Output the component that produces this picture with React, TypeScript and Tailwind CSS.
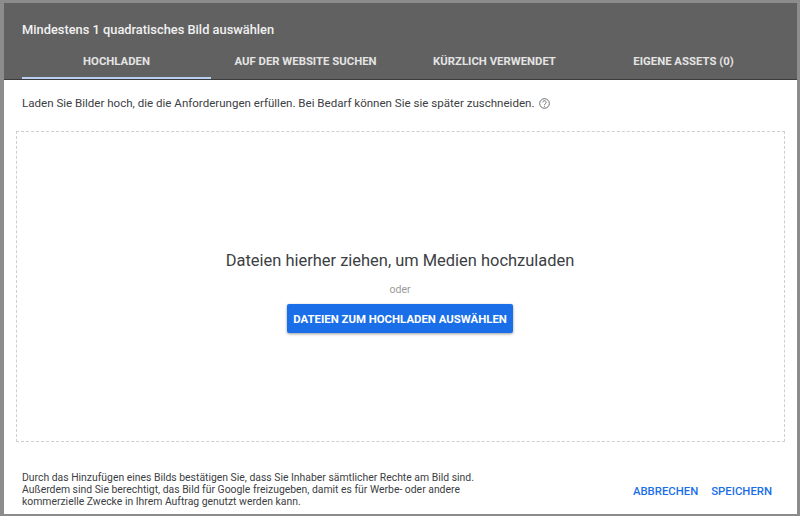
export default function App() {
  const tabs = ["HOCHLADEN", "AUF DER WEBSITE SUCHEN", "KÜRZLICH VERWENDET", "EIGENE ASSETS (0)"];
  return (
    <div className="w-[800px] h-[516px] overflow-hidden bg-[#8c8c8c] pl-[4px] pr-[3px] pt-[3px] pb-[2px] font-['Roboto',sans-serif]">
      <div className="h-full flex flex-col bg-white">
        <div className="h-[77px] shrink-0 bg-[#616161] border-b border-[#3c3c3c] px-[18px] flex flex-col">
          <div className="pt-[18px] h-[46px] text-[12.85px] leading-[18px] font-medium text-[#f1f1f1]">Mindestens 1 quadratisches Bild auswählen</div>
          <div className="flex flex-1">
            {tabs.map((t, i) => (
              <div key={t} className={`w-[189px] text-center text-[11.35px] leading-[24px] font-bold text-[#e4e4e4] ${i === 0 ? "border-b-2 border-[#b9d0f0]" : ""}`}>{t}</div>
            ))}
          </div>
        </div>
        <div className="h-[51px] shrink-0 pl-[18px] pt-[15px] flex items-start gap-[5px] text-[11.55px] leading-[16px] text-[#3c4043]">
          <span>Laden Sie Bilder hoch, die die Anforderungen erfüllen. Bei Bedarf können Sie sie später zuschneiden.</span>
          <svg width="11" height="11" viewBox="0 0 24 24" fill="none" stroke="#5f6368" strokeWidth="2" className="mt-[3px]">
            <circle cx="12" cy="12" r="10.5" />
            <path d="M8.5 9.5a3.5 3.5 0 1 1 5.5 2.9c-1.3.9-2 1.5-2 3" />
            <circle cx="12" cy="18.5" r="0.6" />
          </svg>
        </div>
        <div className="h-[311px] shrink-0 mx-[12px] border border-dashed border-[#cfcfcf] flex flex-col items-center pt-[117px] pr-[1px]">
          <div className="text-[16.45px] leading-[24px] text-[#3c4043]">Dateien hierher ziehen, um Medien hochzuladen</div>
          <div className="mt-[10px] text-[10.5px] leading-[14px] text-[#9a9a9a]">oder</div>
          <button className="mt-[7px] h-[29px] w-[226px] pt-[2px] rounded-[2px] bg-[#1a6fe8] text-white text-[11.4px] font-bold shadow-[0_1px_3px_rgba(0,0,0,0.4)]">DATEIEN ZUM HOCHLADEN AUSWÄHLEN</button>
        </div>
        <div className="flex-1 flex justify-between pl-[18px] pr-[25px] pt-[30px]">
          <div className="text-[10.4px] leading-[12px] text-[#3c4043] w-[480px]">
            Durch das Hinzufügen eines Bilds bestätigen Sie, dass Sie Inhaber sämtlicher Rechte am Bild sind.<br />
            Außerdem sind Sie berechtigt, das Bild für Google freizugeben, damit es für Werbe- oder andere<br />
            kommerzielle Zwecke in Ihrem Auftrag genutzt werden kann.
          </div>
          <div className="flex gap-[13px] pt-[11px] text-[11.35px] leading-[16px] font-medium text-[#1a6fe8]">
            <span>ABBRECHEN</span>
            <span>SPEICHERN</span>
          </div>
        </div>
      </div>
    </div>
  );
}
